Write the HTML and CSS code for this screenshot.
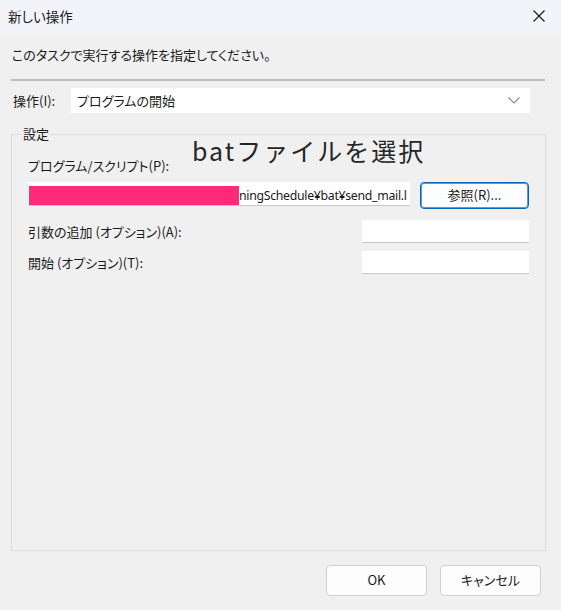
FILE: index.html
```html
<!DOCTYPE html>
<html lang="ja">
<head>
<meta charset="utf-8">
<link rel="stylesheet" href="styles.css">
</head>
<body>
<div class="dialog">
  <div class="titlebar">
    <span class="title">新しい操作</span>
    <svg class="close" width="12" height="12" viewBox="0 0 12 12"><path d="M0.5 0.5L11.5 11.5M11.5 0.5L0.5 11.5" stroke="#1a1a1a" stroke-width="1.2" fill="none"/></svg>
  </div>
  <div class="content">
    <div class="instruction">このタスクで実行する操作を指定してください。</div>
    <div class="separator"></div>
    <div class="action-row">
      <span class="action-label">操作(I):</span>
      <div class="combo">
        <span>プログラムの開始</span>
        <svg class="chevron" width="12" height="7" viewBox="0 0 12 7"><path d="M0.5 0.5L6 6L11.5 0.5" stroke="#8a8a8a" stroke-width="1.1" fill="none"/></svg>
      </div>
    </div>
    <fieldset class="group">
      <legend>設定</legend>
      <div class="annotation">batファイルを選択</div>
      <div class="field-label prog">プログラム/スクリプト(P):</div>
      <div class="prog-row">
        <div class="textbox path"><span class="redact"></span><span class="path-text">ningSchedule¥bat¥send_mail.l</span></div>
        <button class="browse">参照(R)...</button>
      </div>
      <div class="opt-row args">
        <span class="field-label">引数の追加 (オプション)(A):</span>
        <div class="textbox small"></div>
      </div>
      <div class="opt-row start">
        <span class="field-label">開始 (オプション)(T):</span>
        <div class="textbox small"></div>
      </div>
    </fieldset>
    <div class="footer">
      <button class="btn">OK</button>
      <button class="btn">キャンセル</button>
    </div>
  </div>
</div>
</body>
</html>
```

FILE: styles.css
```css
* { box-sizing: border-box; }
html, body { margin: 0; padding: 0; }
body {
  width: 561px;
  height: 610px;
  background: #f0f0f0;
  font-family: "Noto Sans CJK JP", "Noto Sans", sans-serif;
  font-size: 13px;
  font-feature-settings: "palt";
  color: #1a1a1a;
  overflow: hidden;
}
.dialog { width: 561px; height: 610px; display: flex; flex-direction: column; }
.titlebar {
  height: 34px;
  background: #f3f4f9;
  display: flex;
  align-items: center;
  justify-content: space-between;
  padding: 0 16px 2px 8px;
}
.title { font-size: 13.5px; }
.close { display: block; }
.content { padding: 0 16px 0 11px; flex: 1; display: flex; flex-direction: column; }
.instruction { margin-top: 10px; height: 22px; line-height: 22px; padding-left: 1px; }
.separator { margin-top: 13px; height: 2px; background: #bfbfbf; }
.action-row { display: flex; align-items: center; margin-top: 7px; height: 25px; }
.action-label { width: 60px; padding-left: 2px; }
.combo {
  width: 459px;
  height: 25px;
  background: #fff;
  display: flex;
  align-items: center;
  justify-content: space-between;
  padding: 0 10px 0 6px;
}
.group {
  margin: 12px 0 0 0;
  border: 1px solid #dcdcdc;
  border-radius: 0;
  padding: 0 16px 0 16px;
  height: 426px;
  position: relative;
}
.group legend { padding: 0 1px; margin-left: -6px; font-size: 13px; line-height: 18px; }
.annotation {
  position: absolute;
  left: 180px;
  top: -9px;
  font-size: 25px;
  font-weight: 400;
  letter-spacing: 2px;
  font-feature-settings: normal;
  color: #262626;
  line-height: 32px;
}
.field-label { white-space: nowrap; }
.prog { margin-top: 14px; height: 18px; line-height: 18px; }
.prog-row { display: flex; align-items: flex-start; margin-top: 7px; height: 28px; }
.textbox {
  background: #fff;
  border-bottom: 1px solid #c8c8c8;
  height: 24px;
}
.path {
  width: 382px;
  display: flex;
  align-items: flex-end;
}
.redact { width: 210px; height: 19px; background: #ff2a78; margin-left: 1px; flex: none; }
.path-text { font-family: "Noto Sans", sans-serif; font-size: 12.3px; line-height: 19px; letter-spacing: -0.3px; white-space: nowrap; }
.browse {
  margin-left: 10px;
  width: 109px;
  height: 27px;
  background: #fdfdfd;
  border: 1px solid #0067c0;
  border-radius: 4px;
  box-shadow: inset 0 0 0 1px #5a9ad6;
  font: inherit;
  color: #1a1a1a;
  padding: 0 0 2px 0;
}
.opt-row { display: flex; align-items: center; justify-content: space-between; height: 23px; }
.args { margin-top: 10px; }
.start { margin-top: 8px; }
.small { width: 167px; height: 23px; }
.footer { display: flex; justify-content: flex-end; gap: 13px; margin-top: 14px; padding-right: 4px; }
.btn {
  width: 101px;
  height: 31px;
  background: #fdfdfd;
  border: 1px solid #d0d0d0;
  border-radius: 4px;
  font: inherit;
  color: #1a1a1a;
  padding: 0 0 2px 0;
}
```
